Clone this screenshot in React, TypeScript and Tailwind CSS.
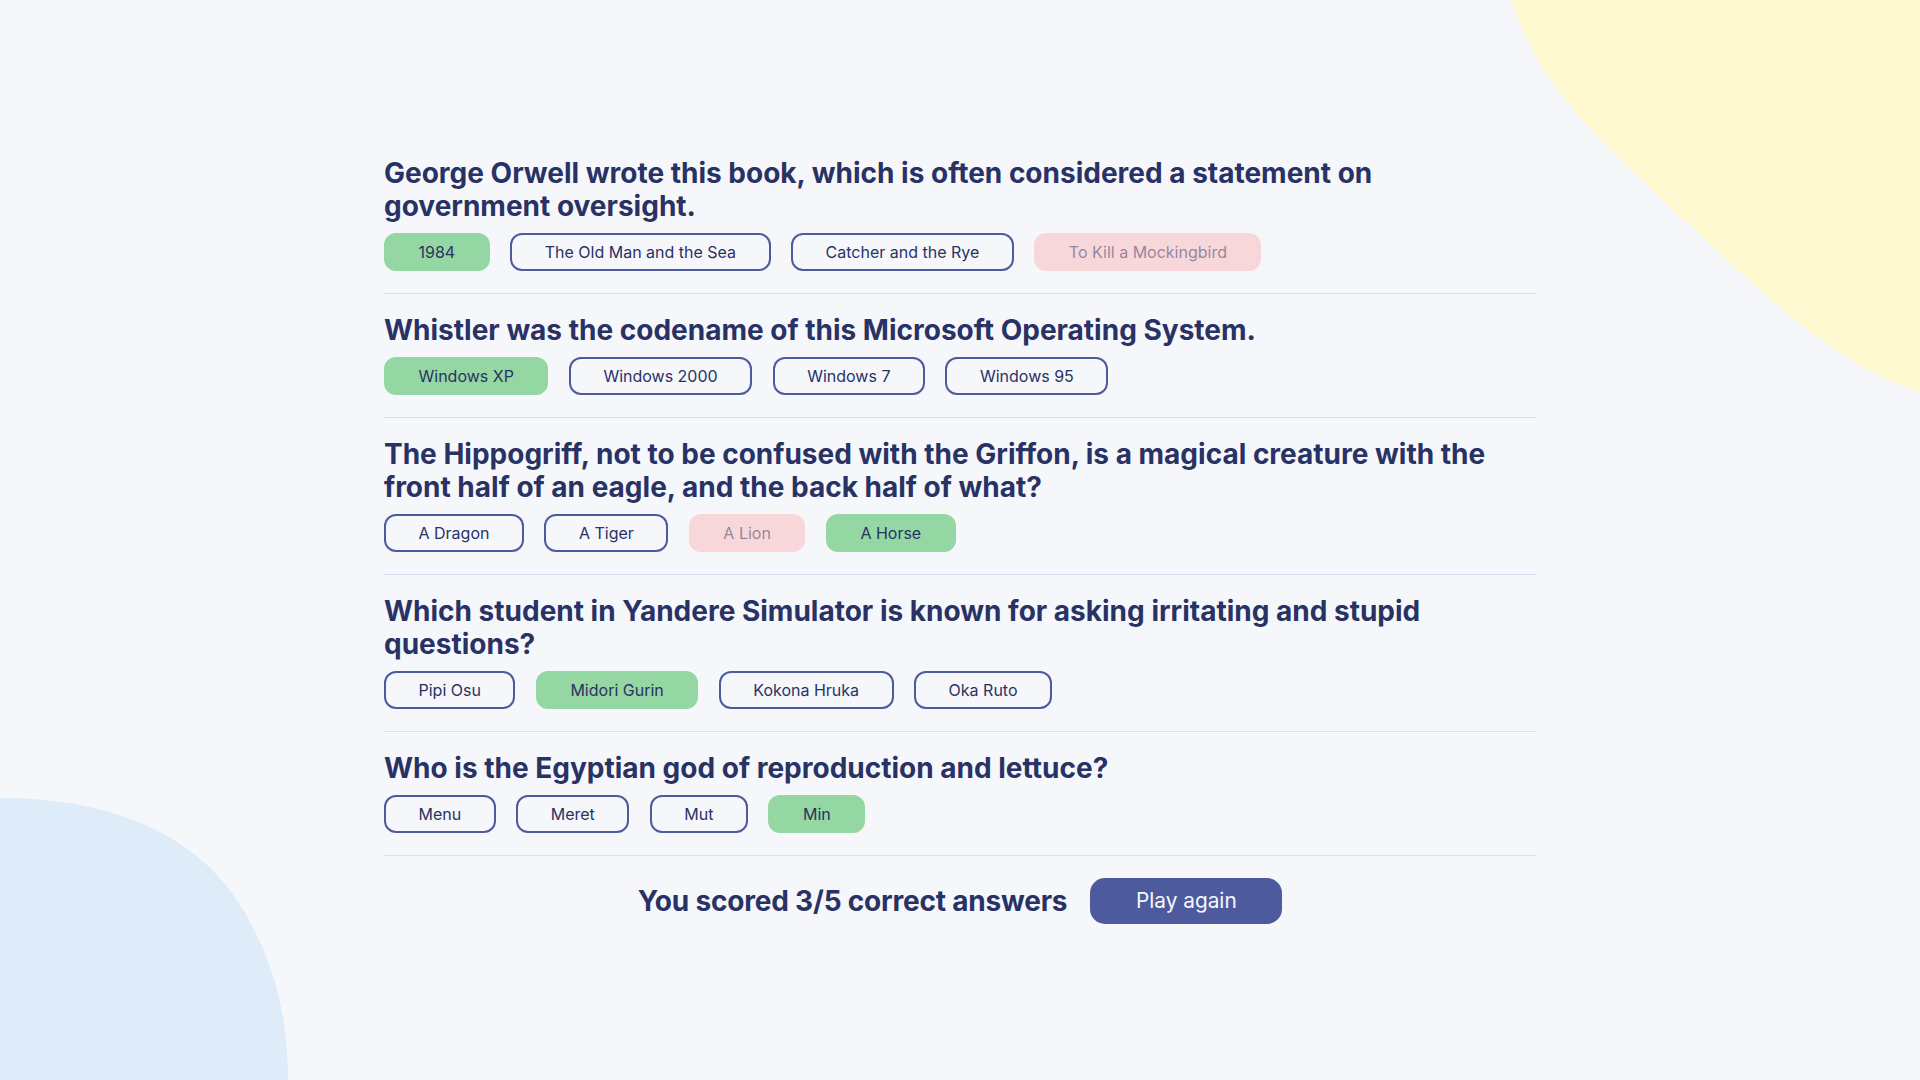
import React from "react";

type Q = {
  question: string;
  answers: { text: string; state: "correct" | "wrong" | "none" }[];
};

const questions: Q[] = [
  {
    question:
      "George Orwell wrote this book, which is often considered a statement on government oversight.",
    answers: [
      { text: "1984", state: "correct" },
      { text: "The Old Man and the Sea", state: "none" },
      { text: "Catcher and the Rye", state: "none" },
      { text: "To Kill a Mockingbird", state: "wrong" },
    ],
  },
  {
    question: "Whistler was the codename of this Microsoft Operating System.",
    answers: [
      { text: "Windows XP", state: "correct" },
      { text: "Windows 2000", state: "none" },
      { text: "Windows 7", state: "none" },
      { text: "Windows 95", state: "none" },
    ],
  },
  {
    question:
      "The Hippogriff, not to be confused with the Griffon, is a magical creature with the front half of an eagle, and the back half of what?",
    answers: [
      { text: "A Dragon", state: "none" },
      { text: "A Tiger", state: "none" },
      { text: "A Lion", state: "wrong" },
      { text: "A Horse", state: "correct" },
    ],
  },
  {
    question:
      "Which student in Yandere Simulator is known for asking irritating and stupid questions?",
    answers: [
      { text: "Pipi Osu", state: "none" },
      { text: "Midori Gurin", state: "correct" },
      { text: "Kokona Hruka", state: "none" },
      { text: "Oka Ruto", state: "none" },
    ],
  },
  {
    question: "Who is the Egyptian god of reproduction and lettuce?",
    answers: [
      { text: "Menu", state: "none" },
      { text: "Meret", state: "none" },
      { text: "Mut", state: "none" },
      { text: "Min", state: "correct" },
    ],
  },
];

function Answer({ text, state }: { text: string; state: Q["answers"][number]["state"] }) {
  const base =
    "h-[38px] px-[32.5px] rounded-[12px] border-2 flex items-center justify-center text-[16px] font-['Inter',sans-serif] whitespace-nowrap";
  if (state === "correct")
    return <div className={`${base} bg-[#94D7A2] border-[#94D7A2] text-[#293264]`}>{text}</div>;
  if (state === "wrong")
    return <div className={`${base} bg-[#F8D7DA] border-[#F8D7DA] text-[#293264]/50`}>{text}</div>;
  return <div className={`${base} border-[#4D5B9E] text-[#293264]`}>{text}</div>;
}

export default function App() {
  return (
    <div className="relative min-h-screen w-full overflow-hidden bg-[#F5F7FB] flex items-center justify-center">
      <svg
        className="absolute inset-0 w-full h-full pointer-events-none"
        viewBox="0 0 1920 1080"
        preserveAspectRatio="none"
      >
        <path
          d="M1511 0 C1540 90 1600 140 1700 235 C1790 320 1850 370 1920 392 L1920 0 Z"
          fill="#FFFAD1"
        />
        <path
          d="M0 798 C120 798 200 840 240 905 C275 960 288 1020 288 1080 L0 1080 Z"
          fill="#DEEBF8"
        />
      </svg>
      <main className="relative w-[1152px]">
        {questions.map((q, i) => (
          <section
            key={i}
            className={`border-b border-[#DBDEF0] pb-[22px] ${i === 0 ? "" : "pt-5"}`}
          >
            <h2 className="font-['Inter',sans-serif] font-bold tracking-[0px] text-[28px] leading-[33px] text-[#293264] mb-[10px]">
              {q.question}
            </h2>
            <div className="flex gap-[20.5px]">
              {q.answers.map((a, j) => (
                <Answer key={j} text={a.text} state={a.state} />
              ))}
            </div>
          </section>
        ))}
        <div className="mt-[22px] flex items-center justify-center gap-[23px]">
          <p className="font-['Inter',sans-serif] font-bold tracking-[-0.2px] text-[28px] text-[#293264]">
            You scored 3/5 correct answers
          </p>
          <button className="w-[192px] h-[46px] rounded-[15px] bg-[#4D5B9E] text-[#F5F7FB] text-[20.8px] font-['Inter',sans-serif]">
            Play again
          </button>
        </div>
      </main>
    </div>
  );
}
